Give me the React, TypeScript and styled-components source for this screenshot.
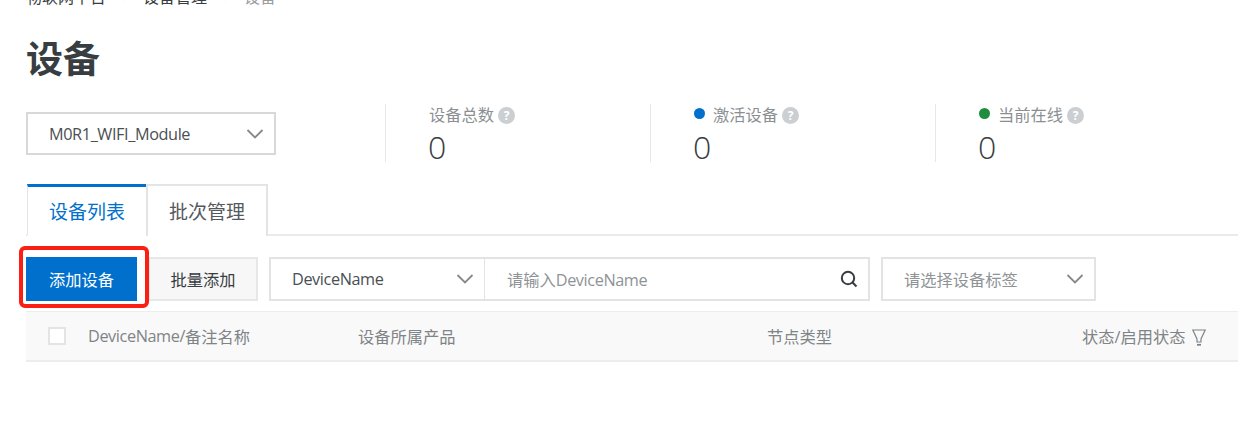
import React from "react";
import styled, { createGlobalStyle } from "styled-components";

const Global = createGlobalStyle`
  html, body { margin: 0; padding: 0; background: #fff; }
  body { font-family: "Open Sans", "Noto Sans CJK SC", sans-serif; color: #373d41; overflow: hidden; }
  #root { width: 1238px; height: 436px; overflow: hidden; }
`;

const Page = styled.div`
  position: relative;
  width: 1238px;
  height: 436px;
  padding-left: 26px;
  box-sizing: border-box;
  overflow: hidden;
`;

const Latin = styled.span`
  letter-spacing: -0.4px;
`;

const Breadcrumb = styled.div`
  display: flex;
  align-items: center;
  height: 20px;
  margin-top: -13px;
  font-size: 16px;
  line-height: 20px;
  color: #373d41;
`;

const Crumb = styled.span<{ $muted?: boolean }>`
  color: ${(p) => (p.$muted ? "#9b9ea0" : "#373d41")};
`;

const CrumbSep = styled.span`
  width: 37px;
  text-align: center;
  font-size: 11px;
  color: #aaa;
`;

const Title = styled.h1`
  margin: 29px 0 0;
  height: 46px;
  font-size: 37px;
  line-height: 46px;
  font-weight: 700;
  color: #373d41;
`;

const Summary = styled.div`
  display: flex;
  margin-top: 22px;
  height: 58px;
`;

const ProductSlot = styled.div`
  width: 359px;
  padding-top: 8px;
  box-sizing: border-box;
`;

const SelectBox = styled.div<{ $w: number; $h: number; $noRight?: boolean }>`
  display: flex;
  align-items: center;
  justify-content: space-between;
  box-sizing: border-box;
  flex: none;
  width: ${(p) => p.$w}px;
  height: ${(p) => p.$h}px;
  padding: 0 10px 0 21px;
  border: 2px solid ${(p) => (p.$h > 43 ? "#e3e3e3" : "#d7d8d9")};
  ${(p) => p.$noRight && "border-right-width: 0;"}
  background: #fff;
  font-size: 16.25px;
  color: #4a4f53;
`;

const SelectText = styled.span<{ $placeholder?: boolean }>`
  color: ${(p) => (p.$placeholder ? "#8f9396" : "#4a4f53")};
  white-space: nowrap;
`;

const Stat = styled.div<{ $w: number; $pad: number }>`
  width: ${(p) => p.$w}px;
  box-sizing: border-box;
  padding-left: ${(p) => p.$pad}px;
  border-left: 1px solid #e6e7e8;
`;

const StatLabel = styled.div`
  display: flex;
  align-items: center;
  height: 23px;
  font-size: 16.25px;
  line-height: 23px;
  color: #8b8f92;
`;

const Dot = styled.span<{ $color: string }>`
  width: 11px;
  height: 11px;
  margin: 0 8px 4px 0;
  border-radius: 50%;
  background: ${(p) => p.$color};
`;

const Help = styled.span`
  display: inline-flex;
  align-items: center;
  justify-content: center;
  width: 17px;
  height: 17px;
  margin-left: 4px;
  border-radius: 50%;
  background: #cccfd1;
  color: #fff;
  font-size: 12px;
  font-weight: 700;
  line-height: 17px;
`;

const StatValue = styled.div`
  height: 35px;
  font-size: 32px;
  line-height: 40px;
  font-weight: 300;
  color: #373d41;
  margin-left: -1px;
`;

const Tabs = styled.div`
  display: flex;
  align-items: stretch;
  margin-top: 22px;
  margin-right: -26px;
  padding-left: 1px;
  height: 52px;
  border-bottom: 2px solid #eaeaea;
  box-sizing: border-box;
`;

const Tab = styled.div<{ $active?: boolean }>`
  display: flex;
  align-items: center;
  justify-content: center;
  box-sizing: border-box;
  width: ${(p) => (p.$active ? 119 : 122)}px;
  height: 52px;
  font-size: 19px;
  color: ${(p) => (p.$active ? "#0070cc" : "#55595d")};
  background: #fff;
  border: 2px solid #e3e4e5;
  border-left-width: ${(p) => (p.$active ? 1 : 2)}px;
  border-right-width: ${(p) => (p.$active ? 0 : 2)}px;
  border-bottom: ${(p) => (p.$active ? "2px solid #fff" : "none")};
  border-top: ${(p) => (p.$active ? "3px solid #0070cc" : "2px solid #e3e4e5")};
`;

const Toolbar = styled.div`
  display: flex;
  align-items: center;
  margin-top: 21px;
  height: 44px;
`;

const Primary = styled.button`
  width: 111px;
  height: 44px;
  margin-right: 11px;
  border: 0;
  padding: 0;
  background: #0070cc;
  color: #fff;
  font: inherit;
  font-size: 16.25px;
`;

const Secondary = styled.button`
  width: 110px;
  height: 44px;
  margin-right: 11px;
  padding: 0;
  border: 2px solid #e6e7e8;
  background: #f7f7f7;
  color: #373d41;
  font: inherit;
  font-size: 16.25px;
`;

const SearchBox = styled.div`
  display: flex;
  align-items: center;
  justify-content: space-between;
  box-sizing: border-box;
  width: 386px;
  height: 44px;
  margin-right: 11px;
  padding: 0 10px 0 22px;
  border: 2px solid #e3e3e3;
  border-left-width: 1px;
  font-size: 16.25px;
  color: #8f9396;
`;

const Highlight = styled.div`
  position: absolute;
  left: 19px;
  top: 246px;
  width: 130px;
  height: 62px;
  box-sizing: border-box;
  border: 4px solid #fb1e12;
  border-radius: 6px;
`;

const TableHead = styled.div`
  display: grid;
  grid-template-columns: 62px 270px 409px 315px 1fr;
  align-items: center;
  box-sizing: border-box;
  margin-top: 10px;
  margin-right: -26px;
  height: 51px;
  background: #f9f9f9;
  border-top: 1px solid #ededed;
  border-bottom: 2px solid #ededed;
  font-size: 16.25px;
  color: #7f8487;
`;

const CheckCell = styled.div`
  padding-left: 22px;
`;

const CheckBox = styled.span`
  display: block;
  box-sizing: border-box;
  width: 18px;
  height: 18px;
  background: #fff;
  border: 2px solid #e3e4e5;
`;

const HeadCell = styled.div`
  display: flex;
  align-items: center;
  white-space: nowrap;
`;

const FilterIcon = styled.svg`
  width: 14px;
  height: 17px;
  margin-left: 7px;
  margin-top: 3px;
`;

const Chevron = ({ color = "#85898c" }: { color?: string }) => (
  <svg width="18" height="18" viewBox="0 0 18 18" fill="none" style={{ flex: "none" }}>
    <path d="M1.5 5 L9 12.5 L16.5 5" stroke={color} strokeWidth="1.8" />
  </svg>
);

export default function App() {
  return (
    <Page>
      <Global />
      <Breadcrumb>
        <Crumb>物联网平台</Crumb>
        <CrumbSep>›</CrumbSep>
        <Crumb>设备管理</Crumb>
        <CrumbSep>›</CrumbSep>
        <Crumb $muted>设备</Crumb>
      </Breadcrumb>
      <Title>设备</Title>
      <Summary>
        <ProductSlot>
          <SelectBox $w={250} $h={43}>
            <SelectText>
              <Latin>M0R1_WIFI_Module</Latin>
            </SelectText>
            <Chevron />
          </SelectBox>
        </ProductSlot>
        <Stat $w={265} $pad={43}>
          <StatLabel>
            设备总数<Help>?</Help>
          </StatLabel>
          <StatValue>0</StatValue>
        </Stat>
        <Stat $w={285} $pad={43}>
          <StatLabel>
            <Dot $color="#0070cc" />
            激活设备<Help>?</Help>
          </StatLabel>
          <StatValue>0</StatValue>
        </Stat>
        <Stat $w={260} $pad={43}>
          <StatLabel>
            <Dot $color="#1e8e3e" />
            当前在线<Help>?</Help>
          </StatLabel>
          <StatValue>0</StatValue>
        </Stat>
      </Summary>
      <Tabs>
        <Tab $active>设备列表</Tab>
        <Tab>批次管理</Tab>
      </Tabs>
      <Toolbar>
        <Primary>添加设备</Primary>
        <Secondary>批量添加</Secondary>
        <SelectBox $w={215} $h={44} $noRight>
          <SelectText>
            <Latin>DeviceName</Latin>
          </SelectText>
          <Chevron />
        </SelectBox>
        <SearchBox>
          <span>
            请输入<Latin>DeviceName</Latin>
          </span>
          <svg width="18" height="18" viewBox="0 0 18 18" fill="none">
            <circle cx="8" cy="8" r="6.2" stroke="#373d41" strokeWidth="2" />
            <path d="M12.3 12.3 L16.5 16.5" stroke="#373d41" strokeWidth="2" />
          </svg>
        </SearchBox>
        <SelectBox $w={215} $h={44}>
          <SelectText $placeholder>请选择设备标签</SelectText>
          <Chevron />
        </SelectBox>
      </Toolbar>
      <TableHead>
        <CheckCell>
          <CheckBox />
        </CheckCell>
        <HeadCell>
          <Latin>DeviceName/</Latin>备注名称
        </HeadCell>
        <HeadCell>设备所属产品</HeadCell>
        <HeadCell>节点类型</HeadCell>
        <HeadCell>
          状态/启用状态
          <FilterIcon viewBox="0 0 14 17" fill="none">
            <path d="M0.8 1 H13.2 L9 10 V13 H5 V10 Z" stroke="#7f8487" strokeWidth="1.2" />
            <path d="M5 15.8 H9" stroke="#7f8487" strokeWidth="1.8" />
          </FilterIcon>
        </HeadCell>
      </TableHead>
      <Highlight />
    </Page>
  );
}
